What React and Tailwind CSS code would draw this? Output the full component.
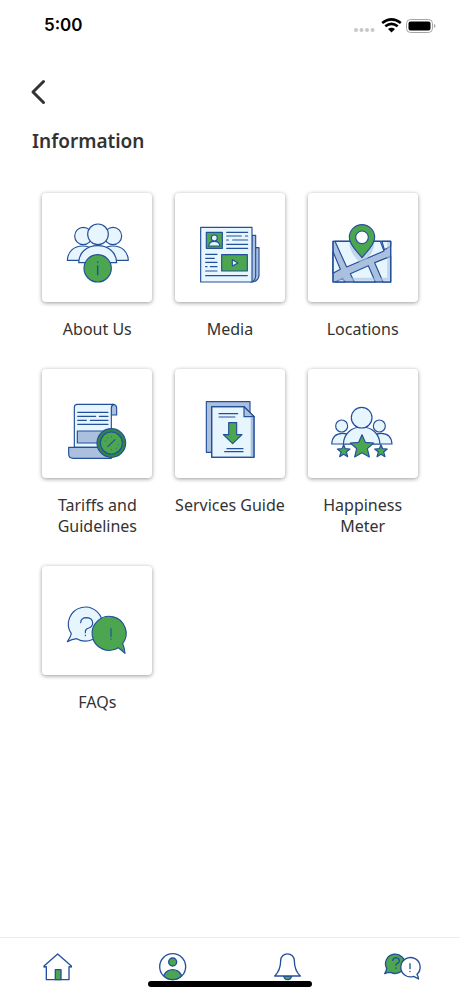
const BLUE = '#24509a';
const PALE = '#e7f6fe';
const STEEL = '#abc0de';
const GREEN = '#4ca64f';

function TileIcon({ viewBox, children }) {
  return (
    <svg
      viewBox={viewBox}
      className="w-20 h-20"
      fill={PALE}
      stroke={BLUE}
      strokeWidth="3.5"
      strokeLinejoin="round"
      strokeLinecap="round"
      aria-hidden="true"
    >
      {children}
    </svg>
  );
}

function AboutIcon() {
  return (
    <TileIcon viewBox="66 67 240 240">
      <path d="M97 224c1-26 20-43 46-43s45 17 46 43z" />
      <path d="M188 224c1-26 20-43 46-43s45 17 46 43z" />
      <circle cx="145" cy="151" r="26" />
      <circle cx="234" cy="151" r="26" />
      <path d="M131 231c1-31 25-51 57-51s56 20 57 51z" />
      <circle cx="189" cy="146" r="31" />
      <circle cx="188" cy="248" r="41" fill={GREEN} />
      <path d="M188 241v26M188 229v1" strokeWidth="4.5" />
    </TileIcon>
  );
}

function MediaIcon() {
  return (
    <TileIcon viewBox="65 67 240 240">
      <path d="M262 186h10v84q-3 19-23 19z" fill={STEEL} />
      <path d="M251 149h11v122q-1 16-15 18z" fill={STEEL} />
      <path d="M97 125h154v164H97z" />
      <path d="M114 140h48v48h-48z" fill={GREEN} />
      <path d="M121 181q2-14 17-14t17 14z" />
      <circle cx="138" cy="157" r="9" />
      <path d="M160 207h77v49h-77z" fill={GREEN} />
      <path d="M192 222v19l17-9z" />
      <path
        d="M175 140h63M175 151h44M231 151h7M175 163h5M193 163h45M175 176h63M175 188h63M112 206h34M112 218h26M112 230h34M112 243h4M126 243h20M112 256h34M112 270h125"
        fill="none"
      />
    </TileIcon>
  );
}

function LocationsIcon() {
  return (
    <TileIcon viewBox="69 67 240 240">
      <path d="M99 167h173v122H99z" fill={STEEL} />
      <path d="M105 167h136l11 29-112 48z" />
      <path d="M246 167h26v15l-19 10z" />
      <path d="M99 198l22 53-22 12z" />
      <path d="M151 264l54-24 21 49h-63z" />
      <path d="M224 231l48-19v77h-23z" />
      <path d="M106 289l22-11 7 11z" />
      <path d="M148 168q-1 36 37 67 39-31 38-67z" fill={STEEL} opacity="0.6" stroke="none" />
      <path
        d="M266 169v112H101"
        fill="none"
        stroke={STEEL}
        strokeWidth="9"
        strokeLinejoin="miter"
        strokeLinecap="butt"
        opacity="0.6"
      />
      <path d="M99 167h173v122H99z" fill="none" />
      <path d="M186 216c-11-15-38-36-38-61a38 38 0 0 1 76 0c0 25-27 46-38 61z" fill={GREEN} />
      <circle cx="186" cy="155" r="19" fill="#fff" />
    </TileIcon>
  );
}

function TariffsIcon() {
  return (
    <TileIcon viewBox="66 64 240 240">
      <path d="M233 125q12 0 12 12v20h-16v-20q0-10 4-12z" fill={STEEL} />
      <path d="M118 254V134q0-9 9-9h109q-7 2-7 12v117z" />
      <path d="M127 205h92v36h-92z" fill={STEEL} />
      <path d="M101 254h128v33H115q-14 0-14-13z" fill={STEEL} />
      <path
        d="M128 149h91M128 161h54M193 161h26M128 173h26M166 173h53M128 185h91"
        fill="none"
      />
      <circle cx="229" cy="241" r="43" fill="#2f8546" />
      <circle cx="229" cy="241" r="33" fill={GREEN} />
      <path d="M218 252l22-21" />
      <path d="M211 235v1M217 225v1M244 256v1M250 246v1M229 222v1M229 261v1" strokeWidth="2" />
    </TileIcon>
  );
}

function ServicesIcon() {
  return (
    <TileIcon viewBox="65 65 240 240">
      <path d="M114 118h131v152H114z" fill={STEEL} />
      <path d="M130 133h97l30 30v122H130z" />
      <path d="M251 165v118" stroke={STEEL} strokeWidth="8" strokeLinecap="butt" />
      <path d="M130 133h97l30 30v122H130z" fill="none" />
      <path d="M227 133v30h30z" fill={STEEL} />
      <path d="M152 154h56M152 164h48M176 259h48M169 268h55" fill="none" />
      <path d="M181 181h24v36h16l-28 27-28-27h16z" fill={GREEN} />
    </TileIcon>
  );
}

function HappinessIcon() {
  return (
    <TileIcon viewBox="69 64 240 240">
      <circle cx="125" cy="190" r="18" />
      <circle cx="238" cy="190" r="18" />
      <path d="M95 244q2-32 33-32t33 32z" />
      <path d="M210 244q2-32 33-32t33 32z" />
      <path d="M130 244c2-32 25-51 55-51s53 19 55 51z" />
      <circle cx="185" cy="165" r="31" />
      <path d="M186 216l10 23 25 2-19 17 6 25-22-13-22 13 6-25-19-17 25-2z" fill={GREEN} />
      <path d="M131 246l5 12 14 1-11 9 4 14-12-7-12 7 4-14-11-9 14-1z" fill={GREEN} />
      <path d="M243 246l5 12 14 1-11 9 4 14-12-7-12 7 4-14-11-9 14-1z" fill={GREEN} />
    </TileIcon>
  );
}

function FaqIcon() {
  return (
    <TileIcon viewBox="65 62 240 240">
      <path d="M108 220a51 51 0 1 1 16 15q-14 1-28 9 9-12 12-24z" />
      <path d="M136 187q1-15 18-15 18 1 18 16 0 11-12 15-10 3-10 11v3M150 224v2" fill="none" />
      <path d="M262 250a51 51 0 1 0-13 12q9 7 20 17-1-15-7-29z" fill={GREEN} />
      <path d="M227 205v24M227 236v1" />
    </TileIcon>
  );
}

function NavIcon({ viewBox, children }) {
  return (
    <svg
      viewBox={viewBox}
      className="w-10 h-[30px]"
      fill="#fff"
      stroke={BLUE}
      strokeWidth="4"
      strokeLinejoin="round"
      strokeLinecap="round"
      aria-hidden="true"
    >
      {children}
    </svg>
  );
}

function HomeIcon() {
  return (
    <NavIcon viewBox="114 66 120 90">
      <path d="M139 110v39h68v-39l7 1v-3l-41-36-41 36v3z" />
      <path d="M166 119h17v30h-17z" fill={GREEN} />
    </NavIcon>
  );
}

function ProfileIcon() {
  return (
    <NavIcon viewBox="459 66 120 90">
      <circle cx="518" cy="110" r="39" />
      <circle cx="518" cy="96" r="12" fill={GREEN} />
      <path d="M491 137q9-18 27-18t27 18q-11 12-27 12t-27-12z" fill={GREEN} />
    </NavIcon>
  );
}

function BellIcon() {
  return (
    <NavIcon viewBox="114 66 120 90">
      <path d="M161 138q2 11 12 11t12-11z" fill={GREEN} />
      <path d="M134 138q18-18 18-46a20 20 0 0 1 41 0q0 28 18 46z" />
    </NavIcon>
  );
}

function ChatIcon() {
  return (
    <NavIcon viewBox="460 66 120 90">
      <path d="M471 115a29 29 0 1 1 12 12q-10 0-18 4 5-7 6-16z" fill={GREEN} />
      <path d="M489 91q2-8 10-8 10 1 10 9 0 6-6 8-4 2-4 6M499 114v1" fill="none" />
      <path d="M562 133a29 29 0 1 0-10 6q7 3 15 8-1-7-5-14z" />
      <path d="M541 101v15M541 124v1" />
    </NavIcon>
  );
}

const tiles = [
  { label: 'About Us', Icon: AboutIcon },
  { label: 'Media', Icon: MediaIcon },
  { label: 'Locations', Icon: LocationsIcon },
  { label: 'Tariffs and Guidelines', Icon: TariffsIcon },
  { label: 'Services Guide', Icon: ServicesIcon },
  { label: 'Happiness Meter', Icon: HappinessIcon },
  { label: 'FAQs', Icon: FaqIcon },
];

const navItems = [
  { label: 'Home', Icon: HomeIcon },
  { label: 'Profile', Icon: ProfileIcon },
  { label: 'Notifications', Icon: BellIcon },
  { label: 'Help', Icon: ChatIcon },
];

function StatusBar() {
  return (
    <div className="flex items-center justify-between h-[52px] pl-11 pr-6">
      <span className="font-['Inter',sans-serif] text-[17px] font-semibold text-black">5:00</span>
      <svg viewBox="1 1 82 16" className="w-[82px] h-4" aria-hidden="true">
        <g fill="#c8c8c8">
          <circle cx="3" cy="13" r="2" />
          <circle cx="8.5" cy="13" r="2" />
          <circle cx="14" cy="13" r="2" />
          <circle cx="19.5" cy="13" r="2" />
        </g>
        <g fill="none" stroke="#000" strokeWidth="2.6">
          <path d="M29.2 6q9.300-7.200 18.600 0" />
          <path d="M32.300 9.300q6.200-4.800 12.400 0" />
        </g>
        <path d="M35 12q3.500-2.600 7 0l-3.500 3.400z" />
        <rect x="53.500" y="2.500" width="26" height="13" rx="4" fill="none" stroke="#a5a5a5" />
        <rect x="55.500" y="4.500" width="22" height="9" rx="2" />
        <path d="M81 7v4q1.500-.6 1.500-2t-1.500-2z" fill="#a5a5a5" />
      </svg>
    </div>
  );
}

export default function App() {
  return (
    <div className="min-h-screen flex flex-col bg-white font-['Noto_Sans',sans-serif] text-[#333]">
      <StatusBar />

      <header className="px-8 pt-6">
        <button type="button" aria-label="Back" className="block -ml-1 h-8">
          <svg
            viewBox="0 0 20 32"
            className="w-5 h-8"
            fill="none"
            stroke="#333"
            strokeWidth="3"
            strokeLinecap="round"
            strokeLinejoin="round"
          >
            <path d="M15.500 5.500L5 16L15.500 26.500" />
          </svg>
        </button>
        <h1 className="mt-5 text-[19px] leading-[26px] font-semibold">Information</h1>
      </header>

      <main className="flex-1 px-[31px] pt-[39px] pb-8">
        <div className="grid grid-cols-3 gap-y-[29px]">
          {tiles.map(({ label, Icon }) => (
            <a key={label} href="#" className="flex flex-col items-center gap-[17px]">
              <span className="flex items-center justify-center w-[110px] h-[109px] rounded-[4px] bg-white shadow-[0_1px_4px_rgba(0,0,0,0.4)]">
                <Icon />
              </span>
              <span className="w-[116px] text-center text-base leading-[21px]">{label}</span>
            </a>
          ))}
        </div>
      </main>

      <nav className="sticky bottom-0 grid grid-cols-4 h-[59px] border-t border-[#ececec] bg-white">
        {navItems.map(({ label, Icon }) => (
          <a key={label} href="#" aria-label={label} className="flex items-center justify-center">
            <Icon />
          </a>
        ))}
        <div className="absolute bottom-[9px] left-1/2 -translate-x-1/2 w-[164px] h-[6px] rounded-full bg-black" />
      </nav>
    </div>
  );
}
